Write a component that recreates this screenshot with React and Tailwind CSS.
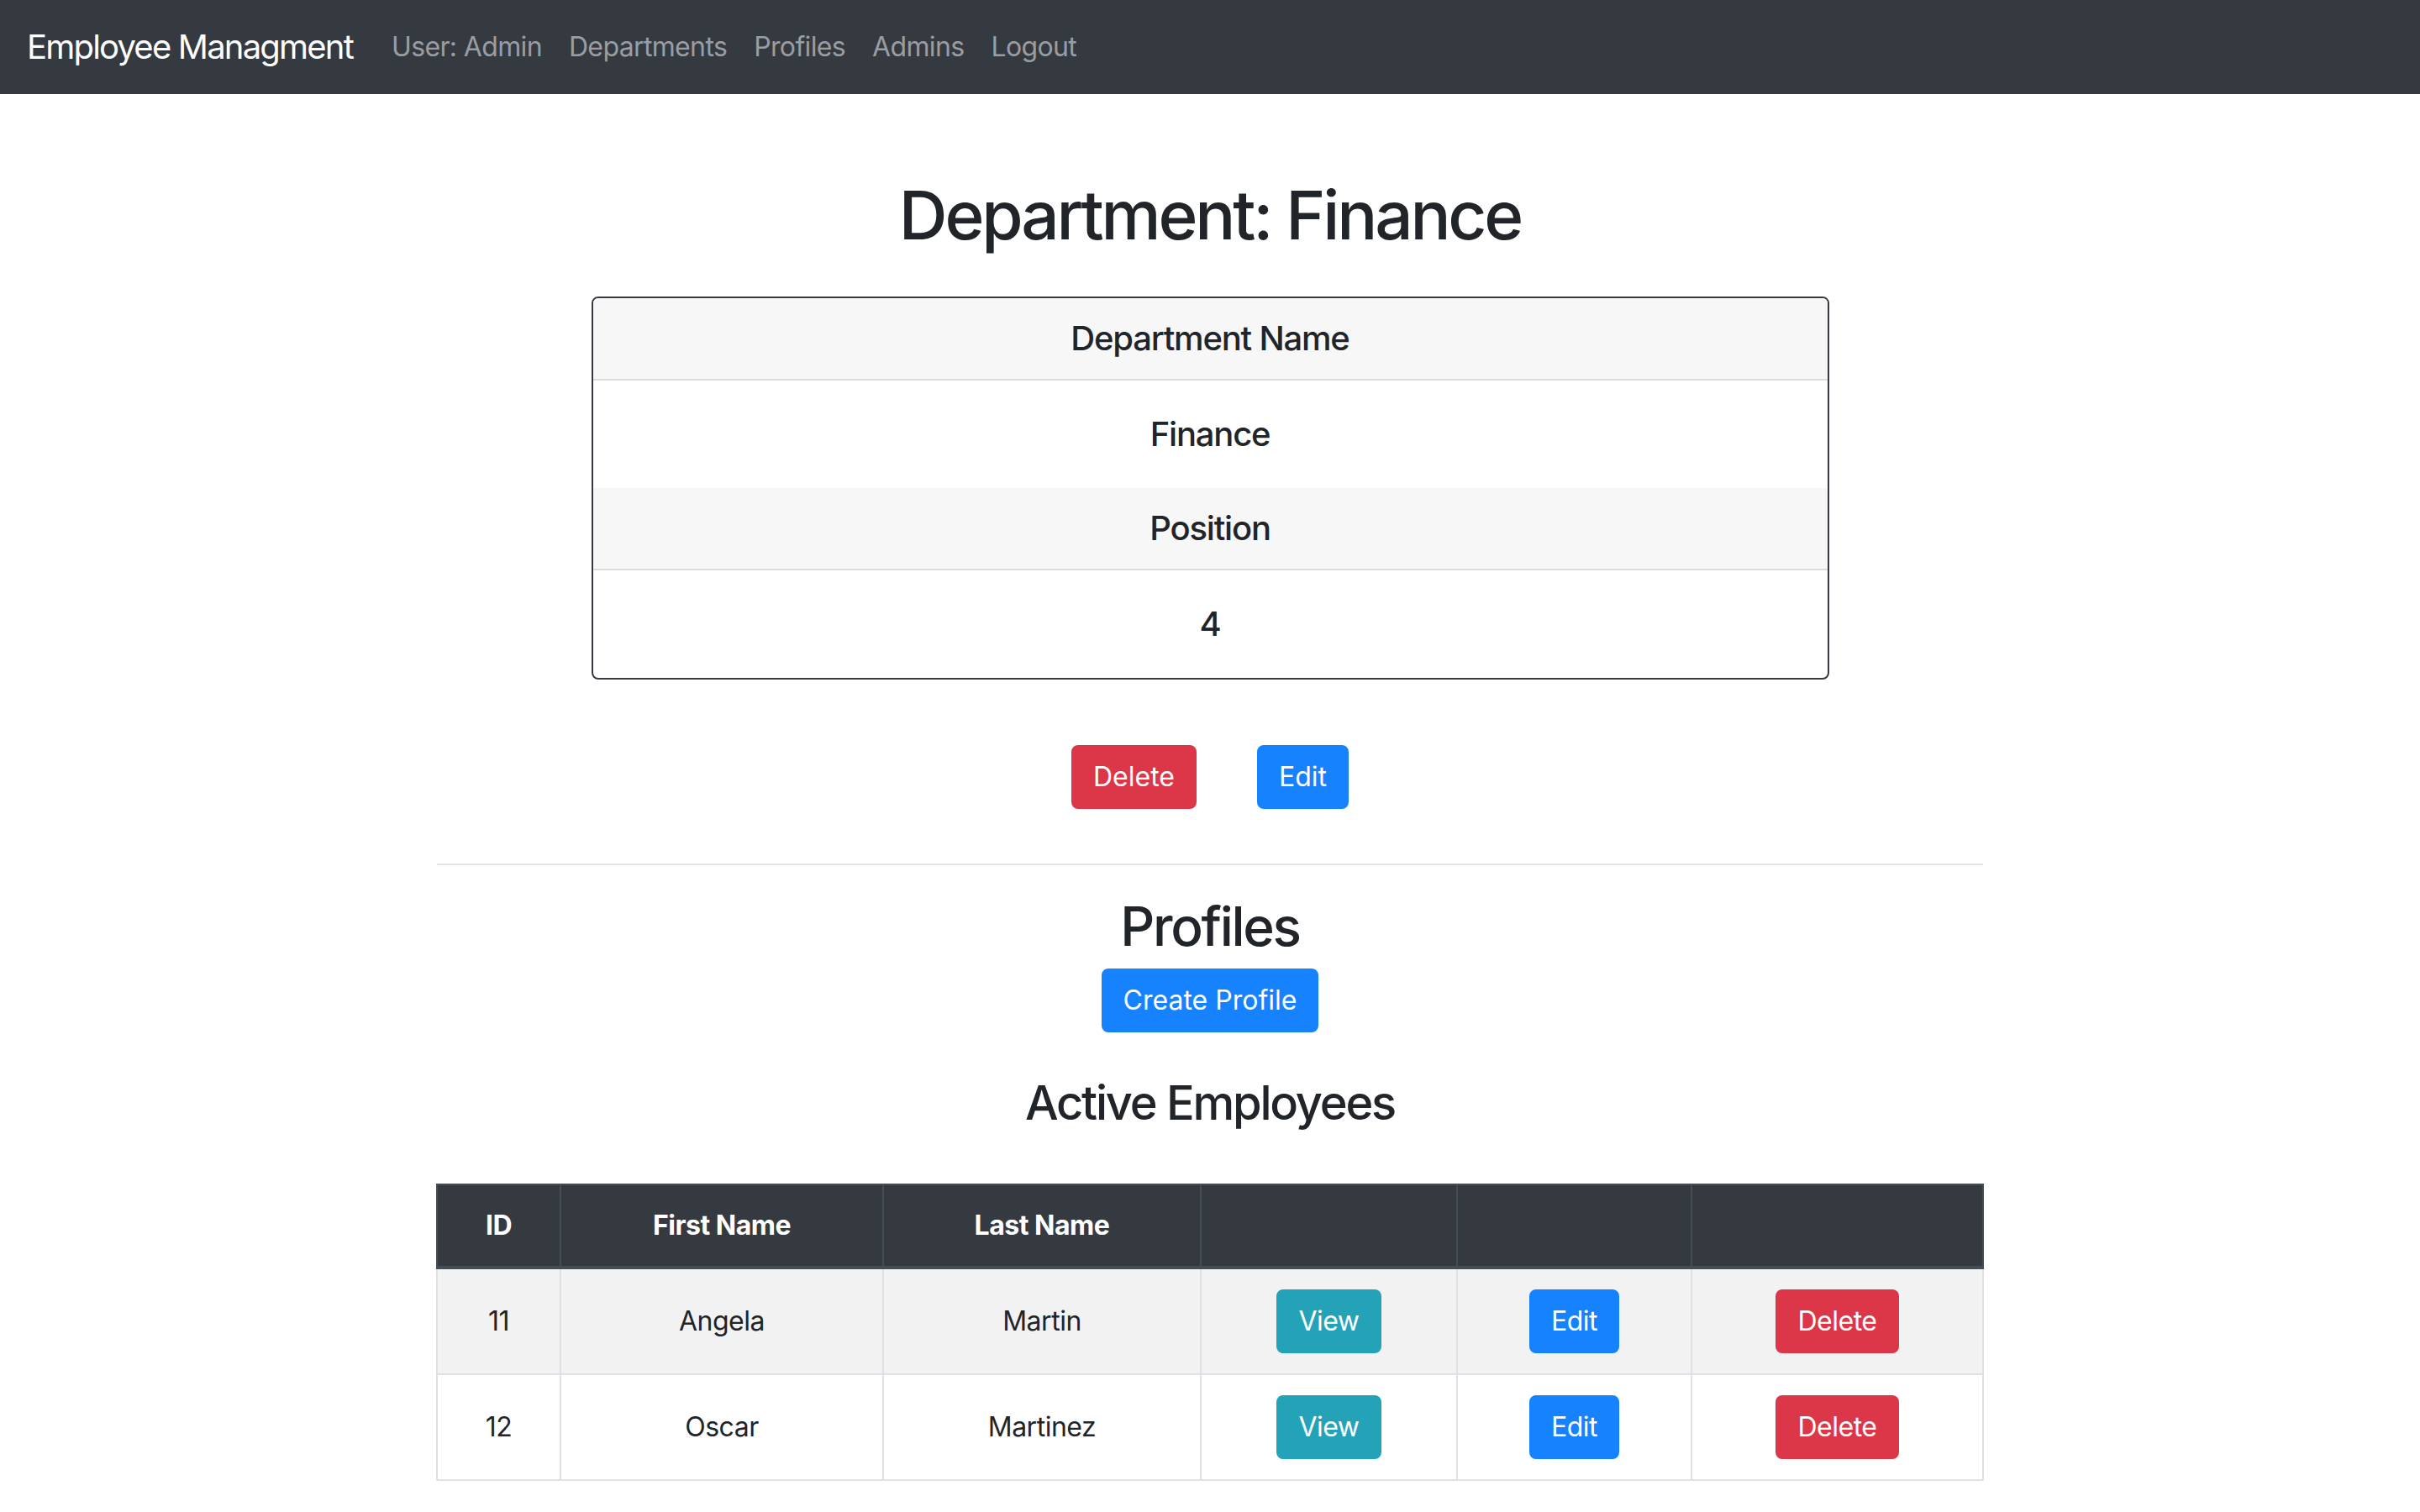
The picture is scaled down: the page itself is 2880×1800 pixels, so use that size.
import React from 'react';

const employees = [
    { id: 11, first: 'Angela', last: 'Martin' },
    { id: 12, first: 'Oscar', last: 'Martinez' },
];

const navLinks = ['User: Admin', 'Departments', 'Profiles', 'Admins', 'Logout'];

// bootstrap-ish button, doubled for the 2x screenshot
const Btn = ({ color, children }) => (
    <button className={`${color} border-[2px] text-white text-[32px] leading-[48px] px-[24px] py-[12px] rounded-[8px] font-normal`}>
        {children}
    </button>
);

const App = () => {
    return (
        <div className="min-h-screen bg-white text-[#212529]" style={{ fontFamily: 'Inter, "Noto Sans", sans-serif' }}>
            <nav className="h-[112px] bg-[#353a41] flex items-center px-[32px]">
                <a className="text-white text-[40px] leading-[60px] mr-[30px] tracking-[-0.045em]">Employee Managment</a>
                <ul className="flex items-center">
                    {navLinks.map((l) => (
                        <li key={l} className="px-[16px] text-[32px] leading-[48px] text-[#9a9da1] tracking-[-0.02em]">{l}</li>
                    ))}
                </ul>
            </nav>

            <main className="w-[1840px] mx-auto flex flex-col items-center pb-[40px]">
                <h1 className="mt-[96px] text-[80px] leading-[96px] font-medium tracking-[-0.04em]">Department: Finance</h1>

                <div className="mt-[49px] w-[1473px] border-[2px] border-[#343a40] rounded-[8px] overflow-hidden text-center text-[40px] leading-[48px] font-medium tracking-[-0.03em]">
                    <div className="bg-[#f7f7f7] border-b-[2px] border-[#dcdcdc] py-[24px]">Department Name</div>
                    <div className="py-[40px]">Finance</div>
                    <div className="bg-[#f7f7f7] border-b-[2px] border-[#dcdcdc] py-[24px]">Position</div>
                    <div className="py-[40px]">4</div>
                </div>

                <div className="mt-[78px] flex gap-[72px]">
                    <Btn color="bg-[#db3749] border-[#db3749]">Delete</Btn>
                    <Btn color="bg-[#1682fd] border-[#1682fd]">Edit</Btn>
                </div>

                <hr className="mt-[65px] w-full border-0 border-t-[2px] border-[#e5e5e5]" />

                <h2 className="mt-[34px] text-[64px] leading-[77px] font-medium tracking-[-0.036em]">Profiles</h2>
                <div className="mt-[12px]">
                    <Btn color="bg-[#1682fd] border-[#1682fd]">Create Profile</Btn>
                </div>

                <h3 className="mt-[51px] text-[56px] leading-[67px] font-medium tracking-[-0.04em]">Active Employees</h3>

                <table className="mt-[62px] w-full border-collapse text-center text-[32px] leading-[48px] table-fixed tracking-[-0.015em]">
                    <colgroup>
                        <col className="w-[147px]" />
                        <col className="w-[384px]" />
                        <col className="w-[378px]" />
                        <col className="w-[305px]" />
                        <col className="w-[279px]" />
                        <col className="w-[347px]" />
                    </colgroup>
                    <thead>
                        <tr className="bg-[#353a41] text-white">
                            {['ID', 'First Name', 'Last Name', '', '', ''].map((h, i) => (
                                <th key={i} className="border-[2px] border-[#454d55] border-b-[4px] py-[24px] font-bold">{h}</th>
                            ))}
                        </tr>
                    </thead>
                    <tbody>
                        {employees.map((e, idx) => (
                            <tr key={e.id} className={idx % 2 === 0 ? 'bg-[#f2f2f2]' : 'bg-white'}>
                                <td className="border-[2px] border-[#dee2e6] py-[24px]">{e.id}</td>
                                <td className="border-[2px] border-[#dee2e6] py-[24px]">{e.first}</td>
                                <td className="border-[2px] border-[#dee2e6] py-[24px]">{e.last}</td>
                                <td className="border-[2px] border-[#dee2e6] py-[24px]"><Btn color="bg-[#24a3b8] border-[#24a3b8]">View</Btn></td>
                                <td className="border-[2px] border-[#dee2e6] py-[24px]"><Btn color="bg-[#1682fd] border-[#1682fd]">Edit</Btn></td>
                                <td className="border-[2px] border-[#dee2e6] py-[24px]"><Btn color="bg-[#db3749] border-[#db3749]">Delete</Btn></td>
                            </tr>
                        ))}
                    </tbody>
                </table>
            </main>
        </div>
    );
};

export default App;
